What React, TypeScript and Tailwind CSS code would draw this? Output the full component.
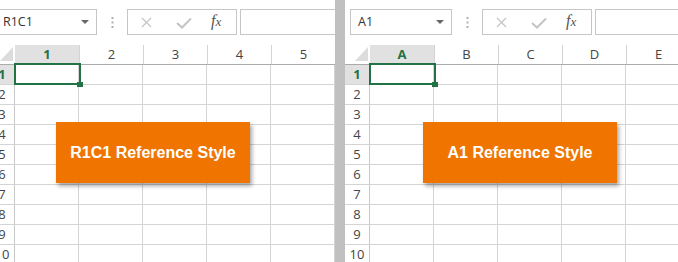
import React from "react";

function Panel({
  name,
  cols,
  boxLeft,
  label,
}: {
  name: string;
  cols: string[];
  boxLeft: number;
  label: string;
}) {
  const rows = [1, 2, 3, 4, 5, 6, 7, 8, 9, 10];
  return (
    <div className="relative w-[420px] h-[262px] bg-white">
      {/* formula bar */}
      <div className="h-[45px] flex items-start pt-[9px]">
        <div className="ml-[5px] w-[102px] h-[26px] border border-[#c6c6c6] flex items-center justify-between pl-[7px] pr-[7px]">
          <span className="text-[12.5px] text-[#333] leading-none">{name}</span>
          <svg width="8" height="5" viewBox="0 0 8 5">
            <path d="M0 0 L8 0 L4 4 Z" fill="#666" />
          </svg>
        </div>
        <div className="w-[30px] h-[26px] flex items-center justify-center">
          <svg width="3" height="11" viewBox="0 0 3 11">
            <rect x="0.5" y="0" width="2" height="2" fill="#b0b0b0" />
            <rect x="0.5" y="4.5" width="2" height="2" fill="#b0b0b0" />
            <rect x="0.5" y="9" width="2" height="2" fill="#b0b0b0" />
          </svg>
        </div>
        <div className="relative w-[110px] h-[26px] border border-[#c6c6c6]">
          <svg className="absolute left-[13px] top-[7px]" width="11" height="11" viewBox="0 0 11 11">
            <path d="M1 1 L10 10 M10 1 L1 10" stroke="#c4c4c4" strokeWidth="1.2" />
          </svg>
          <svg className="absolute left-[48px] top-[7px]" width="16" height="12" viewBox="0 0 16 12">
            <path d="M1 6 L6 10.5 L15 1.5" stroke="#c4c4c4" strokeWidth="2" fill="none" />
          </svg>
          <span className="absolute left-[83px] top-[3px] text-[16px] italic text-[#555] font-['Liberation_Serif',serif] leading-none">
            f<span className="text-[13px]">x</span>
          </span>
        </div>
        <div className="ml-[3px] flex-1 h-[26px] border border-[#c6c6c6]" />
      </div>
      {/* header row */}
      <div className="flex h-[20px] border-b border-[#ababab]">
        <div className="relative w-[25px] h-full">
          <svg className="absolute left-[10px] top-[2px]" width="13" height="14" viewBox="0 0 13 14">
            <path d="M13 0 L13 14 L0 14 Z" fill="#dcdcdc" />
          </svg>
        </div>
        {cols.map((c, i) => (
          <div
            key={c}
            className={
              i === 0
                ? "w-[65px] shrink-0 h-full border-r border-[#d4d4d4] bg-[#e1e1e1] flex items-center justify-center text-[13px] text-[#217346] font-bold"
                : "w-[64px] shrink-0 h-full border-r border-[#d4d4d4] flex items-center justify-center text-[13px] text-[#444]"
            }
          >
            {c}
          </div>
        ))}
      </div>
      {/* rows */}
      {rows.map((r) => (
        <div key={r} className="flex h-[20px] border-b border-[#d4d4d4]">
          <div
            className={
              r === 1
                ? "w-[25px] shrink-0 h-full border-r border-[#c8c8c8] bg-[#e1e1e1] flex items-center justify-center text-[13px] text-[#217346] font-bold"
                : "w-[25px] shrink-0 h-full border-r border-[#c8c8c8] flex items-center justify-center text-[13px] text-[#444]"
            }
          >
            {r}
          </div>
          {cols.map((c) => (
            <div key={c} className="w-[64px] shrink-0 h-full border-r border-[#d4d4d4]" />
          ))}
        </div>
      ))}
      {/* selection */}
      <div className="absolute left-[24px] top-[63px] w-[67px] h-[22px] border-2 border-[#217346]" />
      <div className="absolute left-[87px] top-[82px] w-[6px] h-[5px] bg-[#217346]" />
      {/* callout */}
      <div
        className="absolute top-[122px] w-[194px] h-[61px] bg-[#f07400] shadow-[2px_3px_4px_rgba(0,0,0,0.35)] flex items-center justify-center text-white font-bold text-[16px] font-['Liberation_Sans',Arial,sans-serif]"
        style={{ left: boxLeft }}
      >
        {label}
      </div>
    </div>
  );
}

export default function App() {
  return (
    <div className="flex w-[678px] h-[262px] overflow-hidden bg-white font-['Open_Sans',sans-serif]">
      <div className="w-[335px] h-full overflow-hidden shrink-0">
        <div className="ml-[-10px]">
          <Panel name="R1C1" cols={["1", "2", "3", "4", "5", "6"]} boxLeft={66} label="R1C1 Reference Style" />
        </div>
      </div>
      <div className="w-[10px] h-full bg-[#c0c0c0] shrink-0" />
      <div className="flex-1 h-full overflow-hidden">
        <Panel name="A1" cols={["A", "B", "C", "D", "E", "F"]} boxLeft={78} label="A1 Reference Style" />
      </div>
    </div>
  );
}
